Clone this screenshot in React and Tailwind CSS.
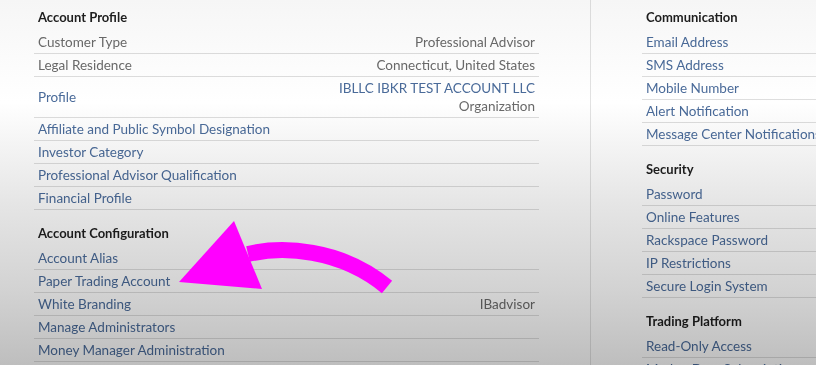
import React from "react";

const Row = ({ label, value, link = true, valueLink = false }) => (
  <div className="flex h-[23px] items-center justify-between border-b border-[#dedede] px-[4px]">
    <span className={link ? "text-[#4a6b9a]" : "text-[#6a6a6a]"}>{label}</span>
    {value && <span className={valueLink ? "text-[#4a6b9a]" : "text-[#6a6a6a]"}>{value}</span>}
  </div>
);

const Heading = ({ children, first }) => (
  <div className={`${first ? "" : "mt-[6px]"} h-[31px] px-[4px] pt-[8px] text-[13px] font-bold leading-[18px] text-[#1e1e1e]`}>
    {children}
  </div>
);

export default function App() {
  return (
    <div
      className="relative h-[365px] w-[816px] overflow-hidden bg-white text-[13.5px] leading-[18px]"
      style={{ fontFamily: "Lato, 'Liberation Sans', sans-serif" }}
    >
      <div className="flex h-full">
        <div className="h-full w-[591px] shrink-0 border-r border-[#e2e2e2] pl-[34px]">
          <div className="w-[505px]">
            <Heading first>Account Profile</Heading>
            <Row label="Customer Type" value="Professional Advisor" link={false} />
            <Row label="Legal Residence" value="Connecticut, United States" link={false} />
            <div className="flex h-[41px] items-center justify-between border-b border-[#dedede] px-[4px]">
              <span className="text-[#4a6b9a]">Profile</span>
              <div className="flex flex-col items-end">
                <span className="text-[#4a6b9a]">IBLLC IBKR TEST ACCOUNT LLC</span>
                <span className="text-[#6a6a6a]">Organization</span>
              </div>
            </div>
            <Row label="Affiliate and Public Symbol Designation" />
            <Row label="Investor Category" />
            <Row label="Professional Advisor Qualification" />
            <Row label="Financial Profile" />
            <Heading>Account Configuration</Heading>
            <Row label="Account Alias" />
            <Row label="Paper Trading Account" />
            <Row label="White Branding" value="IBadvisor" />
            <Row label="Manage Administrators" />
            <Row label="Money Manager Administration" />
          </div>
        </div>
        <div className="h-full w-[400px] shrink-0 pl-[51px]">
          <div className="w-[300px] whitespace-nowrap">
            <Heading first>Communication</Heading>
            <Row label="Email Address" />
            <Row label="SMS Address" />
            <Row label="Mobile Number" />
            <Row label="Alert Notification" />
            <Row label="Message Center Notifications" />
            <Heading>Security</Heading>
            <Row label="Password" />
            <Row label="Online Features" />
            <Row label="Rackspace Password" />
            <Row label="IP Restrictions" />
            <Row label="Secure Login System" />
            <Heading>Trading Platform</Heading>
            <Row label="Read-Only Access" />
            <Row label="Market Data Subscriptions" />
          </div>
        </div>
      </div>
      <div className="pointer-events-none absolute inset-0 mix-blend-multiply bg-[linear-gradient(to_bottom,#f6f6f6_0%,#ffffff_28%,#e6e6e6_55%,#d2d2d2_80%,#bebebe_100%)]" />
      <svg className="pointer-events-none absolute left-0 top-0" width="816" height="365" viewBox="0 0 816 365">
        <path d="M248 254 C 282 246, 340 248, 387 287" fill="none" stroke="#ff00ff" strokeWidth="16" />
        <polygon points="179,282 234,221 262,289" fill="#ff00ff" />
      </svg>
    </div>
  );
}
